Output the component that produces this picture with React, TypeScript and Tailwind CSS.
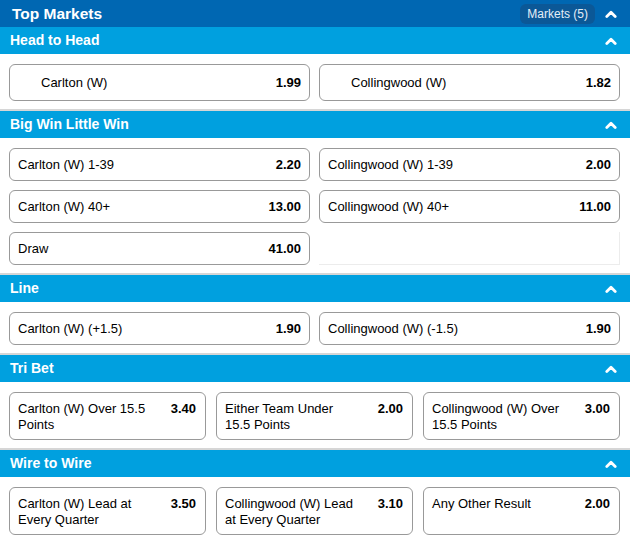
import React from "react";

type Sel = { label: string; odds: string };

type Market = {
  title: string;
  cols: 2 | 3;
  h2h?: boolean;
  items: (Sel | null)[];
};

const markets: Market[] = [
  {
    title: "Head to Head",
    cols: 2,
    h2h: true,
    items: [
      { label: "Carlton (W)", odds: "1.99" },
      { label: "Collingwood (W)", odds: "1.82" },
    ],
  },
  {
    title: "Big Win Little Win",
    cols: 2,
    items: [
      { label: "Carlton (W) 1-39", odds: "2.20" },
      { label: "Collingwood (W) 1-39", odds: "2.00" },
      { label: "Carlton (W) 40+", odds: "13.00" },
      { label: "Collingwood (W) 40+", odds: "11.00" },
      { label: "Draw", odds: "41.00" },
      null,
    ],
  },
  {
    title: "Line",
    cols: 2,
    items: [
      { label: "Carlton (W) (+1.5)", odds: "1.90" },
      { label: "Collingwood (W) (-1.5)", odds: "1.90" },
    ],
  },
  {
    title: "Tri Bet",
    cols: 3,
    items: [
      { label: "Carlton (W) Over 15.5 Points", odds: "3.40" },
      { label: "Either Team Under 15.5 Points", odds: "2.00" },
      { label: "Collingwood (W) Over 15.5 Points", odds: "3.00" },
    ],
  },
  {
    title: "Wire to Wire",
    cols: 3,
    items: [
      { label: "Carlton (W) Lead at Every Quarter", odds: "3.50" },
      { label: "Collingwood (W) Lead at Every Quarter", odds: "3.10" },
      { label: "Any Other Result", odds: "2.00" },
    ],
  },
];

function Chevron() {
  return (
    <svg width="12" height="8" viewBox="0 0 12 8" className="shrink-0">
      <polyline
        points="1.8,6.5 6,2.3 10.2,6.5"
        fill="none"
        stroke="white"
        strokeWidth="2.8"
        strokeLinecap="round"
        strokeLinejoin="round"
      />
    </svg>
  );
}

function Selection({ sel, h2h, tall }: { sel: Sel | null; h2h?: boolean; tall?: boolean }) {
  if (!sel) {
    return <div className="border-r border-b border-[#ececec]" />;
  }
  if (tall) {
    return (
      <div className="flex justify-between rounded-[6px] border border-[#999] bg-white pl-[8px] pr-[9px] pt-[8px] h-[48px] leading-[16px]">
        <span className="w-[132px] text-[13px] text-black">{sel.label}</span>
        <span className="text-[13px] font-bold text-black">{sel.odds}</span>
      </div>
    );
  }
  return (
    <div
      className={
        "flex items-center justify-between rounded-[6px] border border-[#999] bg-white pr-[8px] " +
        (h2h ? "h-[37px] pl-[31px]" : "h-[33px] pl-[8px]")
      }
    >
      <span className="text-[13px] text-black">{sel.label}</span>
      <span className="text-[13px] font-bold text-black">{sel.odds}</span>
    </div>
  );
}

function MarketBlock({ m }: { m: Market }) {
  return (
    <div>
      <div className="flex h-[27px] items-center justify-between bg-[#00a0df] pl-[10px] pr-[13px]">
        <span className="text-[14px] font-bold text-white">{m.title}</span>
        <Chevron />
      </div>
      <div className="border-b-2 border-[#d6d6d6] pl-[9px] pr-[10px] pt-[10px] pb-[8px]">
        <div
          className={
            m.cols === 3
              ? "grid grid-cols-3 gap-[10px]"
              : "grid grid-cols-2 gap-x-[9px] gap-y-[9px]"
          }
        >
          {m.items.map((s, i) => (
            <Selection key={i} sel={s} h2h={m.h2h} tall={m.cols === 3} />
          ))}
        </div>
      </div>
    </div>
  );
}

export default function App() {
  return (
    <div className="w-[630px] bg-white font-['Liberation_Sans',Arial,sans-serif]">
      <div className="flex h-[27px] items-center justify-between bg-[#0067b2] pl-[12px] pr-[13px]">
        <span className="text-[15.5px] font-bold text-white">Top Markets</span>
        <div className="flex items-center gap-[10px]">
          <span className="rounded-[6px] bg-[#0b5897] px-[7px] py-[2px] text-[12px] leading-[16px] text-[#e3eef8]">
            Markets (5)
          </span>
          <Chevron />
        </div>
      </div>
      {markets.map((m) => (
        <MarketBlock key={m.title} m={m} />
      ))}
    </div>
  );
}
